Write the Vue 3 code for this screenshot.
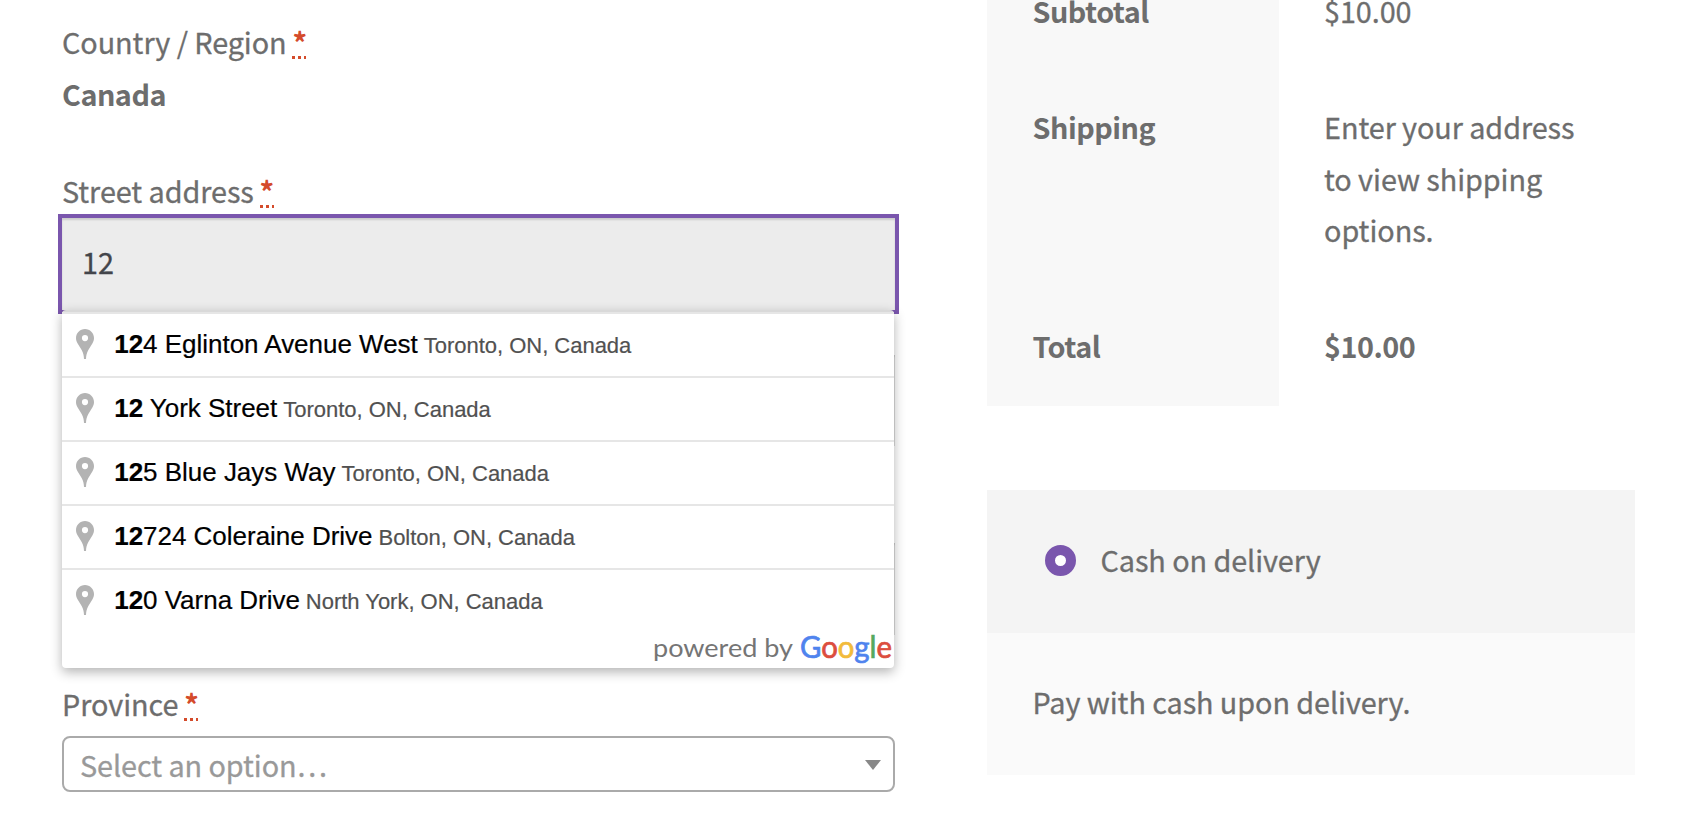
<script setup>
const suggestions = [
  { match: '12', rest: '4 Eglinton Avenue West', area: 'Toronto, ON, Canada' },
  { match: '12', rest: ' York Street', area: 'Toronto, ON, Canada' },
  { match: '12', rest: '5 Blue Jays Way', area: 'Toronto, ON, Canada' },
  { match: '12', rest: '724 Coleraine Drive', area: 'Bolton, ON, Canada' },
  { match: '12', rest: '0 Varna Drive', area: 'North York, ON, Canada' },
]
</script>

<template>
  <main class="checkout">
    <section class="billing">
      <div class="field country">
        <label>Country / Region <abbr class="required">*</abbr></label>
        <strong>Canada</strong>
      </div>
      <div class="field street">
        <label>Street address <abbr class="required">*</abbr></label>
        <div class="address">
          <div class="input focused">12</div>
          <div class="suggestions">
            <div v-for="s in suggestions" :key="s.rest" class="item">
              <svg class="pin" width="18" height="30" viewBox="0 0 18 30">
                <path fill="#b3b3b3" fill-rule="evenodd" d="M9 0C4 0 0 4 0 9c0 2 .6 3.600 1.500 5.200L5.800 21.200C7.200 23.600 7.900 26.500 8 30h2c.1-3.500.8-6.400 2.200-8.800l4.300-7C17.400 12.600 18 11 18 9c0-5-4-9-9-9zm0 6a3.100 3.100 0 1 1 0 6.200A3.100 3.100 0 0 1 9 6z" />
              </svg>
              <span class="query"><b>{{ s.match }}</b>{{ s.rest }}</span>
              <span class="area">{{ s.area }}</span>
            </div>
            <svg class="powered" width="250" height="36" viewBox="0 0 250 36">
              <text class="by" x="9" y="25" textLength="140" lengthAdjust="spacingAndGlyphs">powered by</text>
              <text class="google" x="156" y="26" textLength="92" lengthAdjust="spacingAndGlyphs"><tspan class="blue">G</tspan><tspan class="red">o</tspan><tspan class="yellow">o</tspan><tspan class="blue">g</tspan><tspan class="green">l</tspan><tspan class="red">e</tspan></text>
            </svg>
          </div>
        </div>
      </div>
      <div class="input unit"></div>
      <div class="input city"></div>
      <div class="field province">
        <label>Province <abbr class="required">*</abbr></label>
        <div class="select">
          <span>Select an option…</span>
          <i class="arrow"></i>
        </div>
      </div>
    </section>

    <section class="order">
      <div class="totals">
        <div class="row subtotal"><strong>Subtotal</strong><span>$10.00</span></div>
        <div class="row shipping"><strong>Shipping</strong><span>Enter your address to view shipping options.</span></div>
        <div class="row total"><strong>Total</strong><strong>$10.00</strong></div>
      </div>
      <div class="payment">
        <div class="method"><i class="radio"></i><span>Cash on delivery</span></div>
        <div class="detail">Pay with cash upon delivery.</div>
      </div>
    </section>
  </main>
</template>

<style>
html,
body {
  margin: 0;
  background: #fff;
  overflow: hidden;
}
</style>

<style scoped>
* {
  box-sizing: border-box;
}
.checkout {
  display: grid;
  grid-template-columns: 833px 648px;
  column-gap: 92px;
  width: 1690px;
  height: 830px;
  padding-left: 62px;
  overflow: hidden;
  color: #6d6d6d;
  font: 28.8px/51.77px "Noto Sans CJK SC", "Open Sans", sans-serif;
  letter-spacing: -0.07px;
  -webkit-text-stroke: 0.3px;
}
strong {
  font-weight: 700;
  letter-spacing: -0.5px;
  -webkit-text-stroke: 0;
}
.billing {
  display: flex;
  flex-direction: column;
}
.field {
  display: flex;
  flex-direction: column;
}
label {
  white-space: nowrap;
}
.country {
  height: 149px;
  margin-top: 16px;
}
.street label {
  height: 53px;
}
.required {
  display: inline-block;
  width: 14px;
  height: 27px;
  margin-left: -0.5px;
  line-height: 20px;
  color: #d44b2b;
  font-weight: 700;
  text-align: center;
  text-decoration: none;
  vertical-align: 0;
  -webkit-text-stroke: 0;
  background: repeating-linear-gradient(90deg, #d44b2b 0 3px, transparent 3px 6px) left bottom / 100% 3px no-repeat;
}
.address {
  position: relative;
}
.input {
  flex: none;
  background: #f2f2f2;
  box-shadow: inset 0 2px 2px rgba(0, 0, 0, 0.125), inset -1px 0 0 #e6e6e6;
}
.focused {
  height: 92px;
  padding: 18px 20px 0;
  outline: 4px solid #7a56ad;
  background: #ececec;
  box-shadow: inset 0 2px 2px rgba(0, 0, 0, 0.14);
  color: #43454b;
}
.unit {
  height: 91px;
  margin-top: 45px;
}
.city {
  height: 92px;
  margin-top: 97px;
}
.suggestions {
  position: absolute;
  z-index: 1;
  top: 100%;
  left: 0;
  width: 832px;
  height: 358px;
  border-top: 2px solid #d9d9d9;
  border-radius: 4px;
  background: #fff;
  box-shadow: 0 4px 12px rgba(0, 0, 0, 0.3);
  font-family: "Liberation Sans", Arial, sans-serif;
  letter-spacing: -0.02px;
  -webkit-text-stroke: 0.2px;
}
.item {
  height: 64px;
  padding-left: 14px;
  border-top: 2px solid #e6e6e6;
  color: #515151;
  font-size: 22px;
  line-height: 60px;
  white-space: nowrap;
}
.pin {
  float: left;
  margin: 15px 20.2px 0 0;
}
.query {
  margin-right: 6px;
  color: #000;
  font-size: 26px;
}
.powered {
  display: block;
  margin-left: auto;
  overflow: visible;
  letter-spacing: 0;
  -webkit-text-stroke: 0;
}
.by {
  fill: #757575;
  font: 25px Lato, sans-serif;
}
.google {
  font: 30px Lato, sans-serif;
  stroke-width: 0.7px;
}
.blue {
  fill: #4f83ee;
  stroke: #4f83ee;
}
.red {
  fill: #dc4d3e;
  stroke: #dc4d3e;
}
.yellow {
  fill: #f2bb3b;
  stroke: #f2bb3b;
}
.green {
  fill: #55a95c;
  stroke: #55a95c;
}
.province {
  margin-top: 43px;
}
.province label {
  height: 58px;
}
.select {
  display: flex;
  align-items: center;
  justify-content: space-between;
  height: 56px;
  padding: 2px 12px 0 16px;
  border: 2px solid #aaa;
  border-radius: 8px;
  color: #999;
}
.arrow {
  border: 8px solid transparent;
  border-top: 10px solid #888;
  border-bottom: 0;
}
.totals {
  height: 505px;
  margin-top: -15px;
}
.row {
  display: grid;
  grid-template-columns: 292px 1fr;
}
.row > * {
  padding-top: 15px;
}
.row > :first-child {
  padding-left: 45.5px;
  background: #f8f8f8;
}
.row > :last-child {
  padding-right: 50px;
  padding-left: 45px;
}
.subtotal {
  height: 101px;
}
.row.subtotal > * {
  padding-top: 0;
}
.shipping {
  height: 219px;
  line-height: 51.5px;
}
.total {
  height: 101px;
}
.method {
  display: flex;
  align-items: center;
  height: 143px;
  padding-left: 58px;
  background: #f4f4f4;
}
.method span {
  margin-top: -3px;
}
.radio {
  width: 31px;
  height: 31px;
  margin: -3px 24.5px 0 0;
  border: 10.500px solid #7a56ad;
  border-radius: 50%;
  background: #fff;
}
.detail {
  height: 142px;
  padding: 43px 45.5px;
  background: #fafafa;
}
</style>
